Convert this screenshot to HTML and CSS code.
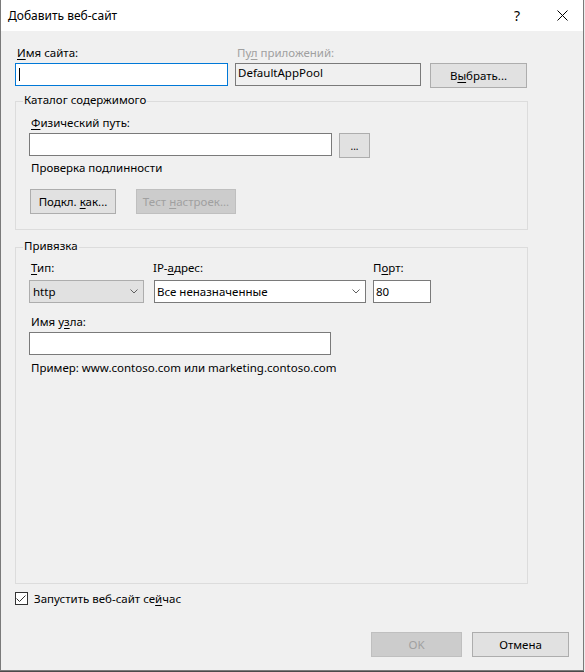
FILE: index.html
```html
<!DOCTYPE html>
<html lang="ru">
<head>
<meta charset="utf-8">
<title>Добавить веб-сайт</title>
<link rel="stylesheet" href="styles.css">
</head>
<body>
<div class="window">
  <div class="titlebar">
    <div class="title">Добавить веб-сайт</div>
    <div class="tb-btn help">?</div>
    <div class="tb-btn close"><svg width="11" height="11" viewBox="0 0 11 11"><path d="M0.5 0.5 L10.5 10.5 M10.5 0.5 L0.5 10.5" stroke="#000" stroke-width="1" fill="none"/></svg></div>
  </div>
  <div class="content">
    <div class="site-grid">
      <div class="lbl lbl-name"><u>И</u>мя сайта:</div>
      <div class="lbl lbl-pool disabled">Пу<u>л</u> приложений:</div>
      <div></div>
      <div class="field focus"><span class="caret"></span></div>
      <div class="field readonly w-pool">DefaultAppPool</div>
      <button class="btn w-select">В<u>ы</u>брать...</button>
    </div>

    <fieldset class="group group-content">
      <legend>Каталог содержимого</legend>
      <div class="group-body body-content">
        <div class="lbl indent"><u>Ф</u>изический путь:</div>
        <div class="path-row">
          <div class="field w-path"></div>
          <button class="btn w-browse"><span class="dots">...</span></button>
        </div>
        <div class="lbl indent auth">Проверка подлинности</div>
        <div class="btn-row">
          <button class="btn w-connect">Подкл. <u>к</u>ак...</button>
          <button class="btn w-test" disabled>Тест <u>н</u>астроек...</button>
        </div>
      </div>
    </fieldset>

    <fieldset class="group group-binding">
      <legend>Привязка</legend>
      <div class="group-body body-binding">
        <div class="bind-grid">
          <div class="lbl indent c1"><u>Т</u>ип:</div>
          <div class="lbl lbl-ip c2">IP-<u>а</u>дрес:</div>
          <div class="lbl c3">П<u>о</u>рт:</div>
          <div class="combo combo-type c1"><span>http</span><svg width="8" height="5" viewBox="0 0 8 5"><path d="M0.5 0.5 L4 4 L7.5 0.5" stroke="#606060" stroke-width="1" fill="none"/></svg></div>
          <div class="combo combo-ip c2"><span>Все неназначенные</span><svg width="8" height="5" viewBox="0 0 8 5"><path d="M0.5 0.5 L4 4 L7.5 0.5" stroke="#606060" stroke-width="1" fill="none"/></svg></div>
          <div class="field w-port c3">80</div>
        </div>
        <div class="lbl indent host-lbl">Имя у<u>з</u>ла:</div>
        <div class="field w-host"></div>
        <div class="lbl indent example">Пример: www.contoso.com или marketing.contoso.com</div>
      </div>
    </fieldset>

    <label class="check-row">
      <span class="checkbox"><svg width="11" height="11" viewBox="0 0 11 11"><path d="M0.5 5.5 L3.5 8.5 L9.5 2.5" stroke="#333" stroke-width="1" fill="none"/></svg></span>
      <span class="check-text">Запустить веб-сайт се<u>й</u>час</span>
    </label>

    <div class="dialog-buttons">
      <button class="btn w-ok" disabled>OK</button>
      <button class="btn w-cancel">Отмена</button>
    </div>
  </div>
</div>
</body>
</html>
```
FILE: styles.css
```css
* { box-sizing: border-box; }
html, body { margin: 0; padding: 0; }
body {
  width: 585px;
  height: 672px;
  overflow: hidden;
  background: #ececec;
  font-family: "Noto Sans", "Open Sans", sans-serif;
  font-size: 11.5px;
  line-height: 16px;
  color: #000;
}
u { text-decoration: underline; text-decoration-thickness: 1px; text-underline-offset: 2px; }

.window {
  width: 584px;
  height: 671px;
  background: #f0f0f0;
  border: 1px solid #7a7a7a;
  border-top: 0;
  box-shadow: 0 1px 0 #4a4a4a;
  display: flex;
  flex-direction: column;
}

.titlebar {
  flex: none;
  height: 31px;
  background: #fff;
  display: flex;
  align-items: center;
}
.title { flex: 1; padding-left: 7px; padding-top: 1px; font-size: 12px; }
.tb-btn { height: 30px; display: flex; align-items: center; }
.help { width: 46px; justify-content: center; padding-left: 2px; font-size: 14px; }
.close { width: 44px; padding-left: 18px; }
.close svg { display: block; }

.content {
  flex: 1;
  padding: 14px 14px 0 14px;
  display: flex;
  flex-direction: column;
}

.lbl { height: 16px; white-space: nowrap; }
.disabled { color: #a0a0a0; }
.indent { margin-left: 2px; }

.site-grid {
  display: grid;
  grid-template-columns: 213px 188px 97px;
  grid-template-rows: 16px 25px;
  column-gap: 7px;
  row-gap: 2px;
  align-items: start;
}
.lbl-name, .lbl-pool { margin-left: 2px; }

.field {
  height: 23px;
  border: 1px solid #7a7a7a;
  background: #fff;
  padding: 0 2px;
  display: flex;
  align-items: center;
  white-space: nowrap;
}
.field.focus { border-color: #0078d7; }
.field.readonly { background: #f0f0f0; padding-top: 1px; align-items: flex-start; }
.w-pool { width: 186px; }
.caret { display: block; width: 1px; height: 13px; background: #000; margin-left: 1px; }

.btn {
  font: inherit;
  line-height: 16px;
  color: #000;
  height: 25px;
  margin: 0;
  padding: 0;
  border: 1px solid #adadad;
  background: #e1e1e1;
  text-align: center;
  white-space: nowrap;
}
.btn:disabled { background: #cccccc; border-color: #bfbfbf; color: #a0a0a0; }

.group {
  margin: 4px 0 0 0;
  padding: 0;
  border: 1px solid #dcdcdc;
  min-inline-size: 0;
  width: 513px;
}
.group legend {
  margin-left: 7px;
  padding: 0 1px 3px 1px;
  line-height: 16px;
}
.group-binding { margin-top: 8px; }

.body-content { padding: 4px 13px 15px 13px; }
.path-row { display: flex; align-items: flex-start; margin-top: 2px; }
.w-path { width: 303px; }
.w-browse { width: 31px; margin-left: 7px; }
.dots { display: inline-block; font-size: 10px; line-height: 10px; padding-top: 4px; }
.auth { margin-top: 2px; }
.btn-row { display: flex; margin-top: 13px; }
.w-connect { width: 86px; margin-left: 1px; }
.w-test { width: 100px; margin-left: 20px; }

.body-binding { padding: 3px 13px 0 13px; height: 326px; }
.bind-grid {
  display: grid;
  grid-template-columns: 125px 219px 58px;
  grid-template-rows: 16px 23px;
  row-gap: 4px;
}
.c1 { grid-column: 1; }
.c2 { grid-column: 2; }
.c3 { grid-column: 3; }
.lbl-ip { margin-left: -1px; }
.combo {
  height: 23px;
  display: flex;
  align-items: center;
  justify-content: space-between;
  padding: 0 5px 0 3px;
  white-space: nowrap;
}
.combo svg { display: block; }
.combo-type { width: 115px; background: #e1e1e1; border: 1px solid #adadad; }
.combo-ip { width: 212px; background: #fff; border: 1px solid #7a7a7a; padding-left: 2px; }
.w-port { width: 58px; }
.host-lbl { margin-top: 11px; }
.w-host { width: 302px; margin-top: 2px; }
.example { margin-top: 5px; }

.check-row {
  display: flex;
  align-items: center;
  height: 13px;
  margin-top: 8px;
}
.checkbox {
  width: 13px;
  height: 13px;
  border: 1px solid #333;
  background: #fff;
  flex: none;
}
.checkbox svg { display: block; }
.check-text { margin-left: 6px; white-space: nowrap; }

.dialog-buttons {
  display: flex;
  justify-content: flex-end;
  column-gap: 10px;
  margin-top: 27px;
}
.w-ok { width: 91px; }
.w-cancel { width: 97px; }
```
